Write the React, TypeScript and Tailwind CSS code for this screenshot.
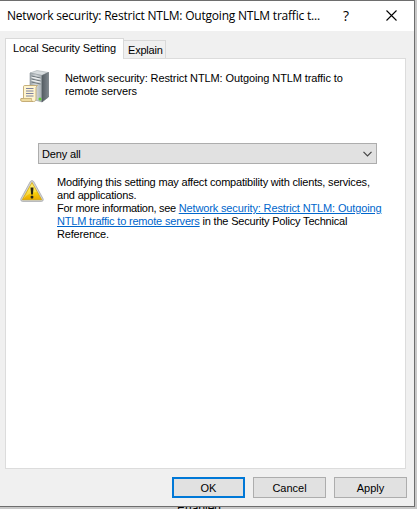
import type { ReactNode } from "react";

function ServerIcon() {
  return (
    <svg width="32" height="34" viewBox="0 0 32 34" className="block shrink-0">
      <defs>
        <linearGradient id="front" x1="0" y1="0" x2="1" y2="0">
          <stop offset="0" stopColor="#9aa3a8" />
          <stop offset="0.5" stopColor="#d3d8da" />
          <stop offset="1" stopColor="#a3abaf" />
        </linearGradient>
        <linearGradient id="side" x1="0" y1="0" x2="1" y2="0">
          <stop offset="0" stopColor="#555d63" />
          <stop offset="1" stopColor="#7e878d" />
        </linearGradient>
      </defs>
      <path d="M10 3 17 .5 28.500 2.500 22 5.500Z" fill="#d8dddf" stroke="#a3abaf" strokeWidth=".6" />
      <path d="M10 3 22 5.500V32L10 28.500Z" fill="url(#front)" stroke="#8d969a" strokeWidth=".6" />
      <path d="M22 5.500 28.500 2.500V27L22 32Z" fill="url(#side)" stroke="#586167" strokeWidth=".6" />
      <path d="M11.500 6 20.500 8M11.500 9 20.500 11M11.500 12 20.500 14" stroke="#6d767b" strokeWidth="1" />
      <path d="M11.500 7.200 20.500 9.200M11.500 10.200 20.500 12.200" stroke="#fff" strokeWidth=".8" />
      <circle cx="20" cy="29" r="1.500" fill="#62ce33" />
      <path d="M4.500 15.500H17.500c-1.500 1-1.500 2-1.500 3V29c0 2-1 2.500-2.500 2.500H2.500C1 31.500.500 30 1 28.500H3.500V18c0-1.500 0-2.500 1-2.500Z" fill="#fff5cf" stroke="#c0a771" strokeWidth=".9" />
      <path d="M1 28.500H11.500c0 1.500 0 3 1.500 3H2.500C1 31.500.500 30 1 28.500Z" fill="#eedba0" stroke="#c0a771" strokeWidth=".8" />
      <path d="M6 18.500H13.500M6 21H13.500M6 23.500H13.500M6 26H13.500" stroke="#7e82a1" strokeWidth="1" />
    </svg>
  );
}

function WarningIcon() {
  return (
    <svg width="24" height="22" viewBox="0 0 24 22" className="block shrink-0">
      <defs>
        <linearGradient id="warn" x1="0" y1="0" x2="0" y2="1">
          <stop offset="0" stopColor="#ffe95c" />
          <stop offset=".5" stopColor="#fcd90b" />
          <stop offset="1" stopColor="#e9a900" />
        </linearGradient>
      </defs>
      <path d="M10.400 1.400Q12 -.4 13.600 1.400L23.200 19Q23.700 21.300 21.500 21.400H2.500Q.3 21.300.8 19Z" fill="#d2d3d5" stroke="#a6a8ac" strokeWidth=".8" />
      <path d="M12 2.500 21.700 19.700H2.300Z" fill="url(#warn)" stroke="#d1a500" strokeWidth=".7" />
      <path d="M12 3.500 17 12Q9 12 4 18.500L3.500 18.500Z" fill="#fff" opacity=".25" />
      <path d="M10.500 7.500H13.500L12.900 14.500H11.100Z" fill="#272316" />
      <rect x="10.700" y="15.800" width="2.600" height="2.600" rx=".7" fill="#272316" />
    </svg>
  );
}

function DialogButton({ children, primary = false }: { children: ReactNode; primary?: boolean }) {
  return (
    <button
      className={
        primary
          ? "h-[21px] w-[73px] border-2 border-[#0078d7] bg-[#e1e1e1] leading-[18px]"
          : "h-[21px] w-[73px] border border-[#adadad] bg-[#e1e1e1] leading-[20px]"
      }
    >
      {children}
    </button>
  );
}

export default function App() {
  return (
    <div className="relative h-[509px] w-[417px] overflow-hidden bg-[#c8c8c8] font-['Liberation_Sans',Arial,sans-serif] text-[11px] leading-[13px] text-black">
      <div className="relative z-10 flex h-[507px] w-[415px] flex-col border-t border-r border-b border-[#6e6e6e] bg-[#f0f0f0]">
        <header className="flex h-[30px] shrink-0 items-center bg-white pl-[7px]">
          <h1 className="w-[333px] whitespace-nowrap font-['Open_Sans','Noto_Sans',sans-serif] text-[12px] leading-[30px] tracking-[-0.21px]">
            Network security: Restrict NTLM: Outgoing NTLM traffic t...
          </h1>
          <span className="w-3 text-center font-['Open_Sans',sans-serif] text-[14px] leading-[28px]">?</span>
          <svg width="11" height="11" viewBox="0 0 11 11" className="mb-[2px] ml-[34px]">
            <path d="M.5.500 10.500 10.500M10.500.500.500 10.500" stroke="#000" strokeWidth="1.100" />
          </svg>
        </header>

        <div className="flex h-[27px] shrink-0 items-end pl-[5px]">
          <div className="z-10 -mb-px h-[21px] w-[119px] border border-b-0 border-[#d9d9d9] bg-white pl-[7px] leading-[19px] tracking-[-0.16px] whitespace-nowrap">
            Local Security Setting
          </div>
          <div className="h-[18px] w-[42px] border border-l-0 border-b-0 border-[#d9d9d9] pl-[4px] leading-[19px] tracking-[-0.2px]">
            Explain
          </div>
        </div>

        <main className="ml-[5px] h-[411px] w-[401px] shrink-0 border border-[#dcdcdc] bg-white">
          <div className="flex pt-[11px] pl-[14px]">
            <ServerIcon />
            <p className="ml-[13px] pt-[2px] whitespace-nowrap tracking-[-0.1px]">
              <span className="block">Network security: Restrict NTLM: Outgoing NTLM traffic to</span>
              <span className="block">remote servers</span>
            </p>
          </div>
          <div className="mt-[39px] ml-8 flex h-[21px] w-[339px] items-center justify-between border border-[#adadad] bg-[#e1e1e1] pr-[4px] pl-[3px]">
            <span className="pt-px tracking-[-0.15px]">Deny all</span>
            <svg width="9" height="6" viewBox="0 0 9 6">
              <path d="M.5.8 4.500 4.800 8.500.8" fill="none" stroke="#444" strokeWidth="1.200" />
            </svg>
          </div>
          <div className="mt-[12px] flex pl-[14px]">
            <div className="pt-[4px]">
              <WarningIcon />
            </div>
            <p className="ml-[13px] whitespace-nowrap tracking-[-0.19px]">
              <span className="block">Modifying this setting may affect compatibility with clients, services,</span>
              <span className="block">and applications.</span>
              <span className="block">
                <span className="tracking-[-0.28px]">For more information, see </span>
                <a className="tracking-[-0.14px] text-[#0066cc] underline">Network security: Restrict NTLM: Outgoing</a>
              </span>
              <span className="block">
                <a className="text-[#0066cc] underline">NTLM traffic to remote servers</a> in the Security Policy Technical
              </span>
              <span className="block">Reference.</span>
            </p>
          </div>
        </main>

        <footer className="mt-2 flex justify-end gap-2 pr-[7px]">
          <DialogButton primary>OK</DialogButton>
          <DialogButton>Cancel</DialogButton>
          <DialogButton>Apply</DialogButton>
        </footer>
      </div>
      <div className="absolute top-[502px] left-[177px] text-[12px]">Enabled</div>
    </div>
  );
}
